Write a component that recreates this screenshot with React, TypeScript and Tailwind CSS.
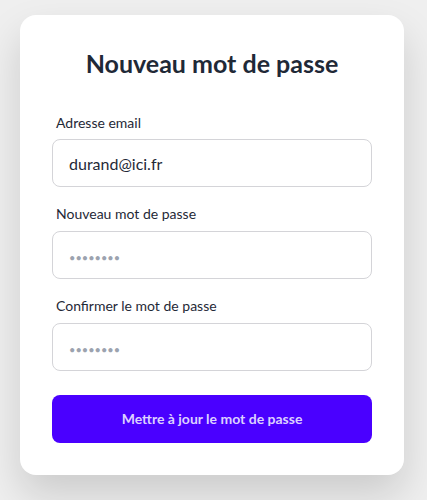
import { useState } from "react";

export default function App() {
  const [email, setEmail] = useState("durand@ici.fr");
  const [password, setPassword] = useState("");
  const [confirm, setConfirm] = useState("");

  const inputCls =
    "w-full h-12 rounded-lg border border-[#d4d4d8] bg-white px-4 text-base text-[#1f2937] outline-none placeholder:text-[#9ca3af] placeholder:text-[11px]";

  return (
    <div
      className="min-h-[500px] bg-[#efefef] pt-[15px] px-5"
      style={{ fontFamily: 'Lato, "Noto Sans", sans-serif' }}
    >
      <div className="w-[384px] rounded-2xl bg-white px-8 pt-8 pb-8 shadow-[0_20px_40px_rgba(0,0,0,0.15)]">
        <h1 className="text-center text-[25px] leading-8 font-bold text-[#1f2937] mb-[34px]">
          Nouveau mot de passe
        </h1>

        <form className="flex flex-col gap-[17px]" onSubmit={(e) => e.preventDefault()}>
          {/* Email */}
          <div>
            <label className="block pl-1 text-sm leading-5 text-[#1f2937] mb-1.5">Adresse email</label>
            <input
              type="email"
              className={inputCls}
              value={email}
              onChange={(e) => setEmail(e.target.value)}
            />
          </div>

          {/* Nouveau mot de passe */}
          <div>
            <label className="block pl-1 text-sm leading-5 text-[#1f2937] mb-[7px]">Nouveau mot de passe</label>
            <input
              type="password"
              className={inputCls}
              placeholder="••••••••"
              value={password}
              onChange={(e) => setPassword(e.target.value)}
            />
          </div>

          {/* Confirmation */}
          <div>
            <label className="block pl-1 text-sm leading-5 text-[#1f2937] mb-[7px]">Confirmer le mot de passe</label>
            <input
              type="password"
              className={inputCls}
              placeholder="••••••••"
              value={confirm}
              onChange={(e) => setConfirm(e.target.value)}
            />
          </div>

          <button
            type="submit"
            className="mt-[7px] h-12 w-full rounded-lg bg-[#4a00ff] text-sm font-bold text-[#dcd0ff]"
          >
            Mettre à jour le mot de passe
          </button>
        </form>
      </div>
    </div>
  );
}
